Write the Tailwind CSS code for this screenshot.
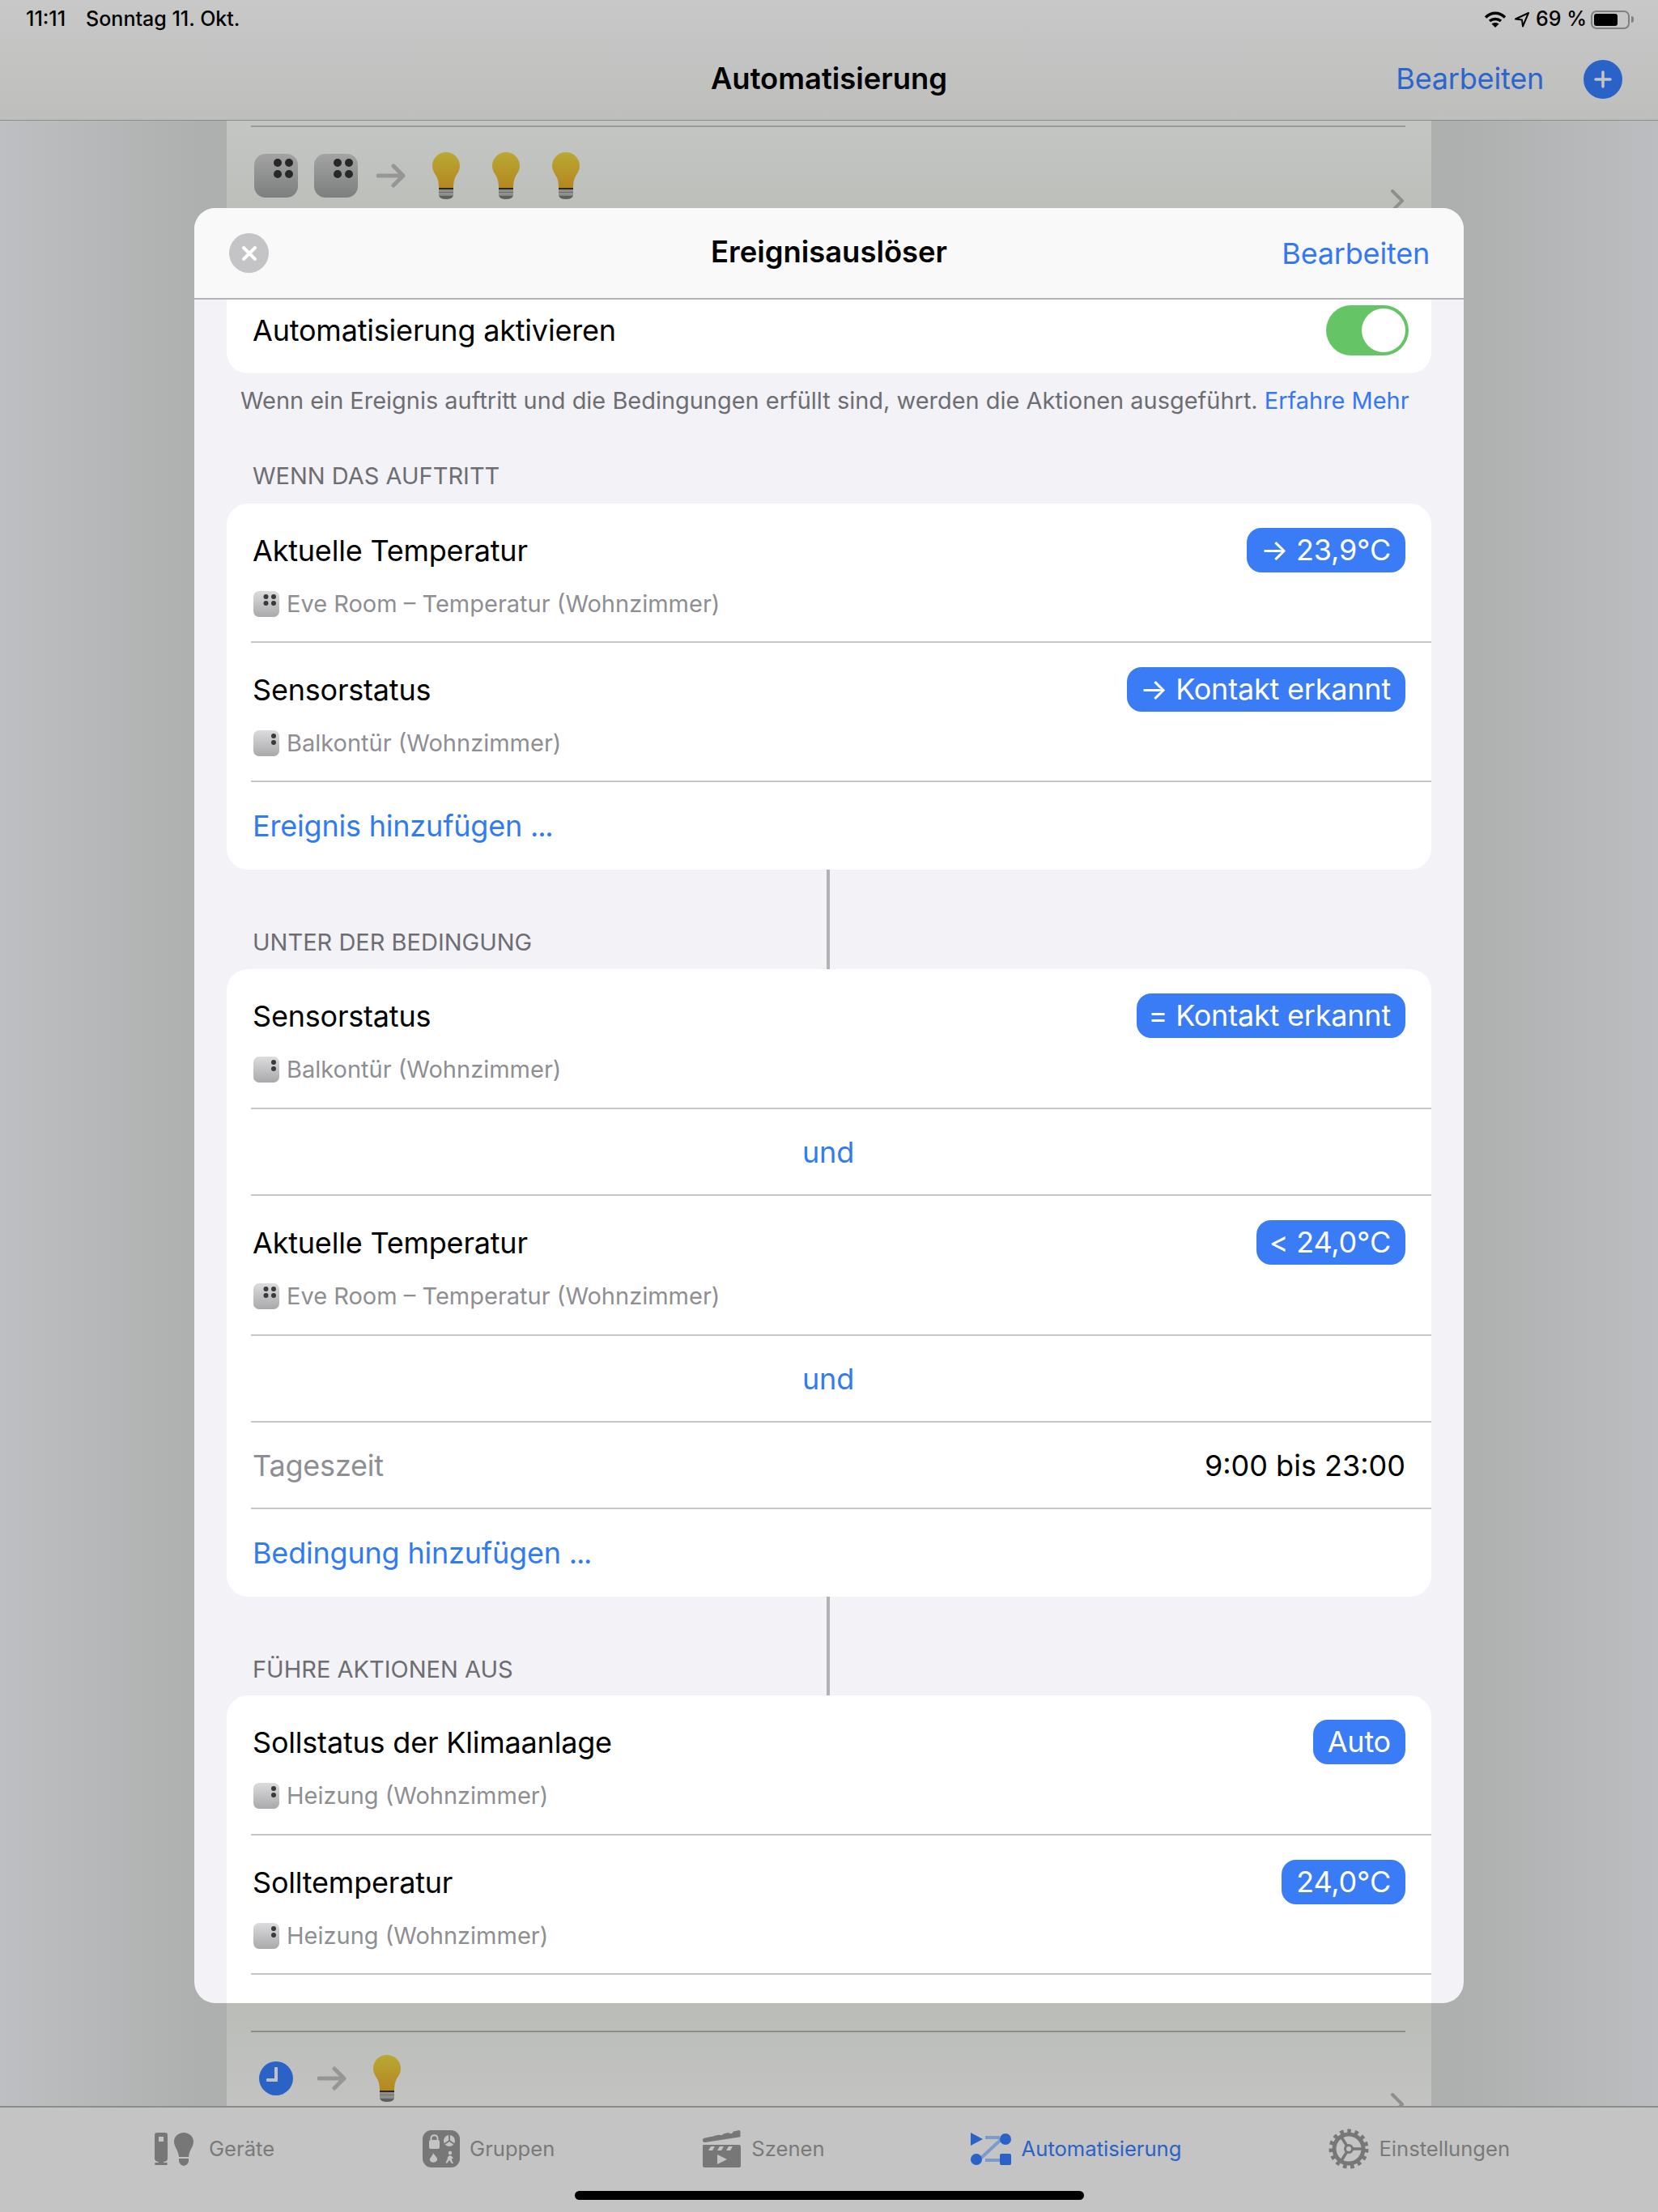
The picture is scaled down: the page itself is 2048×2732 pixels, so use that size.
<!DOCTYPE html>
<html lang="de">
<head>
    <meta charset="UTF-8">
    <meta name="viewport" content="width=device-width, initial-scale=1.0">
    <title>Automatisierung</title>
    <script src="https://cdn.jsdelivr.net/npm/@tailwindcss/browser@4"></script>
</head>
<body class="font-['Inter',sans-serif] text-black">
    <!-- shared icons -->
    <svg class="absolute w-0 h-0">
        <defs>
            <linearGradient id="bulbFill" x1="0" y1="0" x2="0" y2="1">
                <stop offset="0" stop-color="#b9a934"/><stop offset="1" stop-color="#b48720"/>
            </linearGradient>
            <linearGradient id="deviceDim" x1="0" y1="0" x2="0" y2="1">
                <stop offset="0" stop-color="#a2a3a2"/><stop offset="1" stop-color="#7d7f7f"/>
            </linearGradient>
            <linearGradient id="deviceLight" x1="0" y1="0" x2="0" y2="1">
                <stop offset="0" stop-color="#dcdcde"/><stop offset="1" stop-color="#a9a9ab"/>
            </linearGradient>
        </defs>
        <symbol id="bulb" viewBox="0 0 34 58">
            <path fill="url(#bulbFill)" d="M17 0C26.500 0 34 7.500 34 17C34 24 29.500 27 27.500 33C26.500 36 26 40 26 44H8C8 40 7.500 36 6.500 33C4.500 27 0 24 0 17C0 7.500 7.500 0 17 0Z"/>
            <path fill="#2c2d2b" d="M8 44H26V46H8Z"/>
            <path fill="#8f908e" d="M8 46H26V49H8Z"/>
            <path fill="#6d6e6c" d="M8 49H26V50.500H8Z"/>
            <path fill="#8f908e" d="M8 50.500H26V53.500H8Z"/>
            <path fill="#5f605e" d="M8 53.500H26C25 56.500 22 58 17 58C12 58 9 56.500 8 53.500Z"/>
        </symbol>
        <symbol id="sensorBig" viewBox="0 0 54 54">
            <rect width="54" height="54" rx="14" fill="url(#deviceDim)"/>
            <circle cx="29" cy="11" r="5" fill="#262726"/><circle cx="43" cy="11" r="5" fill="#262726"/>
            <circle cx="29" cy="25" r="5" fill="#262726"/><circle cx="43" cy="25" r="5" fill="#262726"/>
        </symbol>
        <symbol id="sensorFour" viewBox="0 0 32 32">
            <rect width="32" height="32" rx="7" fill="url(#deviceLight)"/>
            <circle cx="15.500" cy="7" r="3" fill="#3a3a3c"/><circle cx="25" cy="7" r="3" fill="#3a3a3c"/>
            <circle cx="15.500" cy="15" r="3" fill="#3a3a3c"/><circle cx="25" cy="15" r="3" fill="#3a3a3c"/>
        </symbol>
        <symbol id="sensorTwo" viewBox="0 0 32 32">
            <rect width="32" height="32" rx="7" fill="url(#deviceLight)"/>
            <circle cx="25" cy="7" r="3" fill="#3a3a3c"/><circle cx="25" cy="15" r="3" fill="#3a3a3c"/>
        </symbol>
        <symbol id="arrowGrey" viewBox="0 0 36 30">
            <path d="M2 15H33M21 3L33 15L21 27" fill="none" stroke="#969795" stroke-width="5" stroke-linecap="round" stroke-linejoin="round"/>
        </symbol>
    </svg>

    <div class="relative w-[2048px] h-[2732px] overflow-hidden flex flex-col bg-[linear-gradient(90deg,#bebfc2,#aeb0af_12%,#aeb0af_88%,#bcbdc0)]">
        <!-- status + nav bar -->
        <header class="h-[149px] shrink-0 border-b border-[#8c8d8b] bg-linear-to-b from-[#c7c8c7] to-[#bebfbd]">
            <div class="h-[48px] flex items-center pl-[32px] pr-[30px] text-[25px] font-medium">
                <span>11:11</span>
                <span class="ml-[25px]">Sonntag 11. Okt.</span>
                <div class="ml-auto flex items-center">
                    <svg width="28" height="22" viewBox="0 0 28 22" fill="none" stroke="#000" stroke-width="3.500" stroke-linecap="butt">
                        <path d="M2 8.500C9 1.500 19 1.500 26 8.500"/>
                        <path d="M7 13C11 9.500 17 9.500 21 13"/>
                        <path d="M14 21L9.500 16.500C12 14.500 16 14.500 18.500 16.500Z" fill="#000" stroke="none"/>
                    </svg>
                    <svg class="ml-[9px]" width="20" height="20" viewBox="0 0 20 20" fill="none" stroke="#000" stroke-width="2" stroke-linejoin="round">
                        <path d="M18 2L2 9.500L10 10.500L11 18.500Z"/>
                    </svg>
                    <span class="ml-[7px]">69 %</span>
                    <div class="ml-[5px] w-[48px] h-[23px] border-2 border-[#7f807f] rounded-[7px] p-[2px]">
                        <div class="w-[29px] h-full bg-black rounded-[3px]"></div>
                    </div>
                    <div class="ml-[2px] w-[3px] h-[8px] bg-[#7f807f] rounded-r-full"></div>
                </div>
            </div>
            <div class="relative h-[100px] flex items-center justify-center">
                <h1 class="text-[36.400px] font-semibold -mt-[2px]">Automatisierung</h1>
                <div class="absolute right-[44px] top-[24px] flex items-center gap-[49px]">
                    <span class="text-[36px] tracking-[-0.2px] text-[#2b65ce] -mt-[2px]">Bearbeiten</span>
                    <div class="w-[48px] h-[48px] rounded-full bg-[#2a62c8] flex items-center justify-center">
                        <svg width="24" height="24" viewBox="0 0 24 24" stroke="#c4c5c6" stroke-width="3.500" stroke-linecap="round"><path d="M12 3V21M3 12H21"/></svg>
                    </div>
                </div>
            </div>
        </header>

        <!-- list behind the sheet -->
        <main class="flex-1 min-h-0 ml-[280px] w-[1488px] bg-[#babcb8] flex flex-col justify-between">
            <div class="relative h-[150px] pt-[6px] bg-linear-to-b from-[#c4c6c3] to-[#babcb8]">
                <div class="ml-[30px] mr-[32px] border-t-2 border-[#999a97] pt-[31px] pl-[4px] flex items-center h-[90px]">
                    <svg class="w-[54px] h-[54px]"><use href="#sensorBig"/></svg>
                    <svg class="ml-[20px] w-[54px] h-[54px]"><use href="#sensorBig"/></svg>
                    <svg class="ml-[23px] w-[36px] h-[30px]"><use href="#arrowGrey"/></svg>
                    <svg class="ml-[33px] w-[34px] h-[58px]"><use href="#bulb"/></svg>
                    <svg class="ml-[40px] w-[34px] h-[58px]"><use href="#bulb"/></svg>
                    <svg class="ml-[40px] w-[34px] h-[58px]"><use href="#bulb"/></svg>
                </div>
                <svg class="absolute left-[1437px] top-[84px]" width="18" height="30" viewBox="0 0 18 30" fill="none" stroke="#8f908e" stroke-width="4" stroke-linecap="round" stroke-linejoin="round"><path d="M3 3L15 15L3 27"/></svg>
            </div>
            <div class="relative h-[127px] overflow-hidden bg-linear-to-b from-[#babcb8] to-[#c3c4c2]">
                <div class="ml-[30px] mr-[32px] mt-[34px] border-t-2 border-[#8e8f8d] flex items-center h-[116px] pl-[10px]">
                    <div class="relative w-[42px] h-[42px] rounded-full bg-[#2a62c6]">
                        <div class="absolute left-[19px] top-[7px] w-[4px] h-[18px] bg-[#c0c1c2] rounded-[1px]"></div>
                        <div class="absolute left-[9px] top-[21px] w-[14px] h-[4px] bg-[#c0c1c2] rounded-[1px]"></div>
                    </div>
                    <svg class="ml-[30px] w-[36px] h-[30px]"><use href="#arrowGrey"/></svg>
                    <svg class="ml-[33px] w-[34px] h-[58px]"><use href="#bulb"/></svg>
                </div>
                <svg class="absolute left-[1437px] top-[110px]" width="18" height="30" viewBox="0 0 18 30" fill="none" stroke="#8f908e" stroke-width="4" stroke-linecap="round" stroke-linejoin="round"><path d="M3 3L15 15L3 27"/></svg>
            </div>
        </main>

        <!-- tab bar -->
        <footer class="relative h-[131px] shrink-0 border-t-2 border-[#8c8d8b] bg-[#c3c4c3] text-[25.600px] text-[#797a79]">
            <div class="flex items-center pt-[6px] h-[96px]">
                <div class="ml-[191px] flex items-center">
                    <svg width="48" height="41" viewBox="0 0 48 41" fill="#767776">
                        <path d="M3 0H13C15 0 16 1 16 3V32C16 34 14 36 11 36V37H15C16 37 16 40 15 40H1C0 40 0 37 1 37H5V36C2 36 0 34 0 32V3C0 1 1 0 3 0Z"/>
                        <rect x="5" y="5" width="6" height="6" fill="#c3c4c3"/>
                        <path d="M36 0C43 0 48 5 48 11C48 18 43 20 42 30H30C29 20 24 18 24 11C24 5 29 0 36 0Z"/>
                        <path d="M30 32H42V35C42 38 38 41 36 41C34 41 30 38 30 35Z"/>
                    </svg>
                    <span class="ml-[19px]">Geräte</span>
                </div>
                <div class="ml-[183px] flex items-center">
                    <svg width="46" height="46" viewBox="0 0 46 46">
                        <rect width="46" height="46" rx="11" fill="#767776"/>
                        <g fill="#c3c4c3">
                            <rect x="8" y="12" width="13" height="11" rx="2"/>
                            <circle cx="33" cy="13" r="7"/>
                            <path d="M13 28C14 31 19 33 18 37C17 40 10 41 9 37C8 34 12 33 13 28Z"/>
                            <circle cx="34" cy="28" r="2.200"/>
                            <path d="M33 31L36 32L38 35L36 35L36 37L38 41L36 41L33 37L30 41L28.500 40L31 35L30.500 34Z"/>
                        </g>
                        <path d="M10.500 12V10C10.500 5 18.500 5 18.500 10V12" fill="none" stroke="#c3c4c3" stroke-width="2"/>
                        <path d="M33 6V13L27 17M33 13L39 17" fill="none" stroke="#767776" stroke-width="1.800"/>
                    </svg>
                    <span class="ml-[12px]">Gruppen</span>
                </div>
                <div class="ml-[183px] flex items-center">
                    <svg width="47" height="46" viewBox="0 0 47 46" fill="#767776">
                        <path d="M1 10L45 0C46 0 46.500 1 46.500 2V7C46.500 8 46 8.500 45 8.500L3 15C1 15 0 14 0 13C0 12 0 10.500 1 10Z"/>
                        <path d="M1 18H45C46 18 47 19 47 20V44C47 45 46 46 45 46H2C1 46 0 45 0 44V20C0 19 0 18 1 18Z"/>
                        <g fill="#c3c4c3">
                            <path d="M9 8L12 4H16L13 7.500Z"/><path d="M20 6L23 3H27L24 6Z"/><path d="M32 4L34 1.500H38L36 4Z"/>
                            <path d="M7 25L10 20H15L12 25Z"/><path d="M18 25L21 20H26L23 25Z"/><path d="M29 25L32 20H37L34 25Z"/>
                            <path d="M18 30L30 36L18 42Z"/>
                        </g>
                    </svg>
                    <span class="ml-[13px]">Szenen</span>
                </div>
                <div class="ml-[180px] flex items-center text-[#2a62c8]">
                    <svg width="50" height="40" viewBox="0 0 50 40">
                        <path d="M18 6H36M38 8L12 32M18 34H36" fill="none" stroke="#7a9bcc" stroke-width="4"/>
                        <path d="M0 0L15 8L0 16Z" fill="#2a62c8"/>
                        <circle cx="43" cy="8" r="7" fill="#2a62c8"/>
                        <circle cx="7" cy="33" r="7" fill="#2a62c8"/>
                        <rect x="36" y="26" width="14" height="14" rx="2" fill="#2a62c8"/>
                    </svg>
                    <span class="ml-[13px]">Automatisierung</span>
                </div>
                <div class="ml-[182px] flex items-center">
                    <svg width="50" height="50" viewBox="0 0 50 50" fill="none" stroke="#767776">
                        <circle cx="25" cy="25" r="21.500" stroke-width="6" stroke-dasharray="4.500 4.500"/>
                        <circle cx="25" cy="25" r="18" stroke-width="5"/>
                        <circle cx="25" cy="25" r="4.500" stroke-width="3"/>
                        <path d="M30 25H43M22.500 21L15 9M22.500 29L15 41" stroke-width="3.500"/>
                    </svg>
                    <span class="ml-[12px]">Einstellungen</span>
                </div>
            </div>
            <div class="absolute left-[710px] top-[103px] w-[629px] h-[11px] rounded-full bg-black"></div>
        </footer>

        <!-- modal sheet -->
        <section class="absolute left-[240px] top-[257px] w-[1568px] h-[2217px] rounded-[26px] overflow-hidden bg-[#f2f2f7] flex flex-col">
            <div class="h-[113px] shrink-0 border-b-2 border-[#b3b3b5] bg-[#f9f9f9] flex items-center pl-[43px] pr-[42px] relative">
                <div class="w-[49px] h-[49px] rounded-full bg-[#c4c4c6] flex items-center justify-center">
                    <svg width="20" height="20" viewBox="0 0 20 20" stroke="#fff" stroke-width="4" stroke-linecap="round"><path d="M3 3L17 17M17 3L3 17"/></svg>
                </div>
                <h2 class="absolute inset-x-0 text-center text-[36.400px] font-semibold -mt-[2px]">Ereignisauslöser</h2>
                <span class="ml-auto text-[36px] tracking-[-0.2px] text-[#3478f6]">Bearbeiten</span>
            </div>

            <div class="mx-[40px] flex flex-col">
                <div class="h-[91px] pb-[15px] pl-[32px] pr-[28px] bg-white rounded-b-[26px] flex items-center justify-between text-[36px] tracking-[-0.2px]">
                    <span>Automatisierung aktivieren</span>
                    <div class="w-[102px] h-[62px] rounded-full bg-[#65c466] p-[4px] flex justify-end">
                        <div class="w-[54px] h-[54px] rounded-full bg-white"></div>
                    </div>
                </div>
                <p class="pt-[16px] pl-[17px] h-[52px] text-[28.950px] leading-[36px] text-[#6d6d72] whitespace-nowrap">Wenn ein Ereignis auftritt und die Bedingungen erfüllt sind, werden die Aktionen ausgeführt. <span class="text-[#3478f6]">Erfahre Mehr</span></p>
                <p class="mt-[57px] mb-[16px] pl-[32px] text-[29px] leading-[36px] text-[#6d6d72] uppercase">Wenn das auftritt</p>

                <!-- events -->
                <div class="bg-white rounded-[26px] text-[36px] tracking-[-0.2px]">
                    <div class="ml-[30px] h-[172px] pl-[2px] pr-[32px] border-b-2 border-[#c6c6c8] flex flex-col">
                        <div class="h-[116px] flex items-center justify-between">
                            <span>Aktuelle Temperatur</span>
                            <span class="h-[55px] -mt-[2px] pl-[17px] pr-[18px] rounded-[18px] bg-[#3a7bf6] text-white flex items-center">→ 23,9°C</span>
                        </div>
                        <div class="-mt-[14px] flex items-center text-[29px] tracking-normal text-[#8e8e93]">
                            <svg class="w-[32px] h-[32px] ml-[1px]"><use href="#sensorFour"/></svg>
                            <span class="ml-[9px]">Eve Room – Temperatur (Wohnzimmer)</span>
                        </div>
                    </div>
                    <div class="ml-[30px] h-[172px] pl-[2px] pr-[32px] border-b-2 border-[#c6c6c8] flex flex-col">
                        <div class="h-[116px] flex items-center justify-between">
                            <span>Sensorstatus</span>
                            <span class="h-[55px] -mt-[2px] pl-[16px] pr-[18px] rounded-[18px] bg-[#3a7bf6] text-white flex items-center">→ Kontakt erkannt</span>
                        </div>
                        <div class="-mt-[14px] flex items-center text-[29px] tracking-normal text-[#8e8e93]">
                            <svg class="w-[32px] h-[32px] ml-[1px]"><use href="#sensorTwo"/></svg>
                            <span class="ml-[9px]">Balkontür (Wohnzimmer)</span>
                        </div>
                    </div>
                    <div class="h-[108px] pl-[32px] flex items-center text-[#2f7bf6]"><span>Ereignis hinzufügen <span class="tracking-[-1.200px]">...</span></span></div>
                </div>

                <div class="relative pt-[72px] pb-[15px] pl-[32px] text-[29px] leading-[36px] text-[#6d6d72] uppercase">
                    <div class="absolute left-[741px] top-0 w-[4px] h-full bg-[#b2b2b4]"></div>
                    Unter der Bedingung
                </div>

                <!-- conditions -->
                <div class="bg-white rounded-[26px] text-[36px] tracking-[-0.2px]">
                    <div class="ml-[30px] h-[173px] pl-[2px] pr-[32px] border-b-2 border-[#c6c6c8] flex flex-col">
                        <div class="h-[116px] flex items-center justify-between">
                            <span>Sensorstatus</span>
                            <span class="h-[55px] -mt-[2px] pl-[15px] pr-[18px] rounded-[18px] bg-[#3a7bf6] text-white flex items-center">= Kontakt erkannt</span>
                        </div>
                        <div class="-mt-[14px] flex items-center text-[29px] tracking-normal text-[#8e8e93]">
                            <svg class="w-[32px] h-[32px] ml-[1px]"><use href="#sensorTwo"/></svg>
                            <span class="ml-[9px]">Balkontür (Wohnzimmer)</span>
                        </div>
                    </div>
                    <div class="ml-[30px] h-[107px] pr-[32px] border-b-2 border-[#c6c6c8] flex items-center justify-center text-[#2f7bf6]">und</div>
                    <div class="ml-[30px] h-[173px] pl-[2px] pr-[32px] border-b-2 border-[#c6c6c8] flex flex-col">
                        <div class="h-[116px] flex items-center justify-between">
                            <span>Aktuelle Temperatur</span>
                            <span class="h-[55px] -mt-[2px] pl-[16px] pr-[18px] rounded-[18px] bg-[#3a7bf6] text-white flex items-center">&lt; 24,0°C</span>
                        </div>
                        <div class="-mt-[14px] flex items-center text-[29px] tracking-normal text-[#8e8e93]">
                            <svg class="w-[32px] h-[32px] ml-[1px]"><use href="#sensorFour"/></svg>
                            <span class="ml-[9px]">Eve Room – Temperatur (Wohnzimmer)</span>
                        </div>
                    </div>
                    <div class="ml-[30px] h-[107px] pr-[32px] border-b-2 border-[#c6c6c8] flex items-center justify-center text-[#2f7bf6]">und</div>
                    <div class="ml-[30px] h-[107px] pl-[2px] pr-[32px] border-b-2 border-[#c6c6c8] flex items-center justify-between">
                        <span class="text-[#8e8e93]">Tageszeit</span>
                        <span class="tracking-normal">9:00 bis 23:00</span>
                    </div>
                    <div class="h-[108px] pl-[32px] flex items-center text-[#2f7bf6]"><span>Bedingung hinzufügen <span class="tracking-[-1.200px]">...</span></span></div>
                </div>

                <div class="relative pt-[72px] pb-[14px] pl-[32px] text-[29px] leading-[36px] text-[#6d6d72] uppercase">
                    <div class="absolute left-[741px] top-0 w-[4px] h-full bg-[#b2b2b4]"></div>
                    Führe Aktionen aus
                </div>

                <!-- actions -->
                <div class="bg-white rounded-t-[26px] h-[400px] text-[36px] tracking-[-0.2px]">
                    <div class="ml-[30px] h-[173px] pl-[2px] pr-[32px] border-b-2 border-[#c6c6c8] flex flex-col">
                        <div class="h-[116px] flex items-center justify-between">
                            <span>Sollstatus der Klimaanlage</span>
                            <span class="h-[55px] -mt-[2px] px-[18px] rounded-[18px] bg-[#3a7bf6] text-white flex items-center">Auto</span>
                        </div>
                        <div class="-mt-[14px] flex items-center text-[29px] tracking-normal text-[#8e8e93]">
                            <svg class="w-[32px] h-[32px] ml-[1px]"><use href="#sensorTwo"/></svg>
                            <span class="ml-[9px]">Heizung (Wohnzimmer)</span>
                        </div>
                    </div>
                    <div class="ml-[30px] h-[172px] pl-[2px] pr-[32px] border-b-2 border-[#c6c6c8] flex flex-col">
                        <div class="h-[116px] flex items-center justify-between">
                            <span>Solltemperatur</span>
                            <span class="h-[55px] -mt-[2px] px-[18px] rounded-[18px] bg-[#3a7bf6] text-white flex items-center">24,0°C</span>
                        </div>
                        <div class="-mt-[14px] flex items-center text-[29px] tracking-normal text-[#8e8e93]">
                            <svg class="w-[32px] h-[32px] ml-[1px]"><use href="#sensorTwo"/></svg>
                            <span class="ml-[9px]">Heizung (Wohnzimmer)</span>
                        </div>
                    </div>
                </div>
            </div>
        </section>
    </div>
</body>
</html>
